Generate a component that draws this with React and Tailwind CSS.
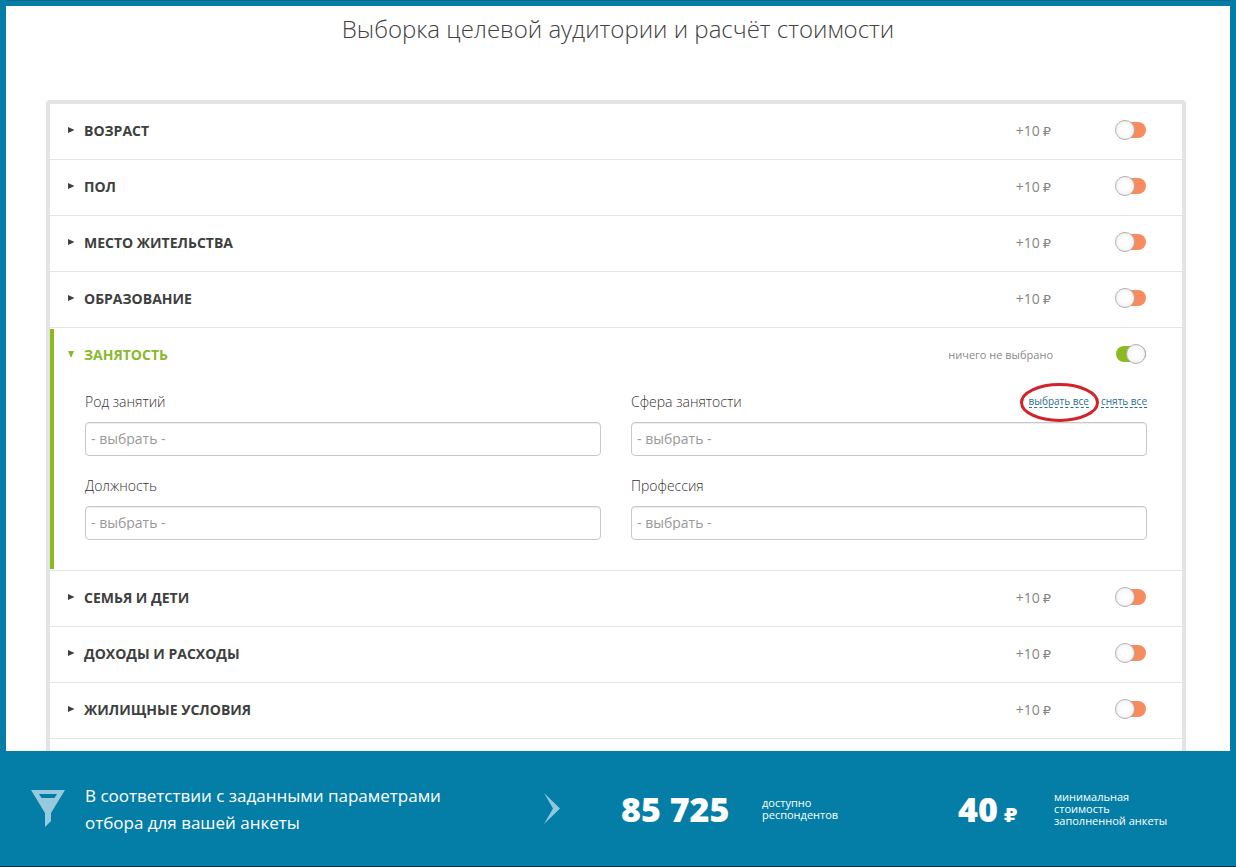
import { useState } from "react";

const before = ["ВОЗРАСТ", "ПОЛ", "МЕСТО ЖИТЕЛЬСТВА", "ОБРАЗОВАНИЕ"];
const after = ["СЕМЬЯ И ДЕТИ", "ДОХОДЫ И РАСХОДЫ", "ЖИЛИЩНЫЕ УСЛОВИЯ"];

function Toggle({ label, initial = false }) {
  const [on, setOn] = useState(initial);
  return (
    <label className="mb-1 flex h-5 w-8 shrink-0 cursor-pointer items-center justify-end">
      <input
        type="checkbox"
        role="switch"
        aria-label={label}
        checked={on}
        onChange={() => setOn(!on)}
        className="peer sr-only"
      />
      <span className="flex h-4 w-[30px] items-center justify-start rounded-full bg-[#f68b5e] peer-checked:justify-end peer-checked:bg-[#8ab920]">
        <span
          className={
            "size-5 shrink-0 rounded-full border border-[#b0b0b6] bg-radial from-white from-30% to-[#e9e9ec] " +
            (on ? "" : "-ml-px")
          }
        />
      </span>
    </label>
  );
}

function Arrow({ open }) {
  return (
    <svg aria-hidden="true" viewBox="0 0 6 6" className="mb-0.5 size-[6px] shrink-0 fill-current">
      {open ? <path d="M0 0h6L3.500 6h-1z" /> : <path d="M0 0L6 2.700v.6L0 6z" />}
    </svg>
  );
}

function Row({ title }) {
  return (
    <li className="flex h-14 items-center border-b border-[#e4e4e4] pr-9 pl-[18px] text-[#3d403f]">
      <button
        type="button"
        className="mb-0.5 flex flex-1 items-center gap-[10px] text-left text-[14px] leading-5 font-bold"
      >
        <Arrow />
        {title}
      </button>
      <span className="mr-[63px] mb-0.5 flex items-baseline gap-[3px] text-[14px] leading-5 text-[#858585]">
        +10 <span className="font-['DejaVu_Sans',sans-serif] text-[13px] leading-none">₽</span>
      </span>
      <Toggle label={title} />
    </li>
  );
}

function Field({ id, label, children }) {
  return (
    <div className="min-w-0">
      <div className="flex h-5 items-center justify-between">
        <label htmlFor={id} className="text-[14px] leading-5 font-light text-[#333]">
          {label}
        </label>
        {children}
      </div>
      <div className="mt-[10px] flex h-[34px] items-center rounded border border-[#c8c8c8] bg-white px-[5px] pb-0.5 shadow-[inset_0_1px_1px_rgba(0,0,0,0.075)]">
        <input
          id={id}
          type="text"
          placeholder="- выбрать -"
          className="h-[15px] w-full text-[14px] leading-[15px] outline-none placeholder:text-[#999]"
        />
      </div>
    </div>
  );
}

function Link({ children }) {
  return (
    <a href="#" className="border-b border-dashed border-[#2a6f96] text-[10px] leading-[11px] text-[#2a6f96]">
      {children}
    </a>
  );
}

export default function App() {
  return (
    <div className="flex h-screen flex-col bg-[#047ea6] font-['Open_Sans','Noto_Sans',sans-serif]">
      <main className="mx-[6px] flex min-h-0 flex-1 flex-col overflow-hidden border-t border-[#0d6789] bg-white">
        <div className="h-[5px] shrink-0 bg-[#047ea6]" />
        <h1 className="pt-[7px] text-center text-[24px] leading-8 font-light text-[#3f4142]">
          Выборка целевой аудитории и расчёт стоимости
        </h1>
        <ul className="mt-[55px] mr-11 ml-10 flex-1 rounded-t border-4 border-b-0 border-[#e4e4e4]">
          {before.map((t) => (
            <Row key={t} title={t} />
          ))}
          <li className="border-b border-[#e4e4e4] py-px">
            <div className="border-l-4 border-[#8ab920] pr-[35px] pb-[29px] pl-[14px]">
              <div className="flex h-[53px] items-center pr-px">
                <button
                  type="button"
                  aria-expanded="true"
                  className="mb-0.5 flex flex-1 items-center gap-[10px] text-left text-[14px] leading-5 font-bold text-[#8ab92d]"
                >
                  <Arrow open />
                  ЗАНЯТОСТЬ
                </button>
                <span className="mr-[61px] mb-0.5 text-[11px] leading-5 text-[#8a8a8a]">ничего не выбрано</span>
                <Toggle label="ЗАНЯТОСТЬ" initial />
              </div>
              <div className="mt-[10px] grid grid-cols-2 gap-x-[30px] gap-y-5 pl-[17px]">
                <Field id="activity" label="Род занятий" />
                <Field id="sphere" label="Сфера занятости">
                  <span className="flex items-center gap-3">
                    <span className="relative flex">
                      <Link>выбрать все</Link>
                      <svg
                        aria-hidden="true"
                        viewBox="0 0 80 40"
                        className="pointer-events-none absolute top-1/2 left-1/2 h-10 w-20 -translate-x-1/2 -translate-y-1/2"
                      >
                        <ellipse cx="40.500" cy="20.500" rx="38" ry="18" fill="none" stroke="#d2232a" strokeWidth="3" />
                      </svg>
                    </span>
                    <Link>снять все</Link>
                  </span>
                </Field>
                <Field id="position" label="Должность" />
                <Field id="profession" label="Профессия" />
              </div>
            </div>
          </li>
          {after.map((t) => (
            <Row key={t} title={t} />
          ))}
        </ul>
      </main>
      <footer className="flex h-[116px] shrink-0 items-center border-b border-[#12303c] text-white">
        <div className="flex w-1/2 items-center pl-[31px]">
          <svg aria-hidden="true" viewBox="0 0 34 37" className="h-[37px] w-[34px] shrink-0 fill-[#97cade]">
            <path fillRule="evenodd" d="M0 0H34L20 23V31L14 37V23ZM8 4L10.500 8H23.500L26 4Z" />
          </svg>
          <p className="ml-5 w-[400px] text-[17px] leading-[27px]">
            В соответствии с заданными параметрами
            <br />
            отбора для вашей анкеты
          </p>
          <svg aria-hidden="true" viewBox="0 0 16 31" className="ml-auto mr-[58px] h-[31px] w-4 shrink-0 fill-[#8fc8dc]">
            <path d="M0 0L16 15.500L0 31L9 15.500Z" />
          </svg>
        </div>
        <div className="flex flex-1 items-center">
          <p className="ml-[3px] w-[141px] text-[34px] leading-10 font-extrabold whitespace-nowrap">85 725</p>
          <p className="text-[11px] leading-3">
            доступно
            <br />
            респондентов
          </p>
        </div>
        <div className="flex w-[278px] items-center">
          <p className="flex w-24 items-baseline gap-[6px] text-[34px] leading-10 font-extrabold whitespace-nowrap">
            40<span className="font-['DejaVu_Sans',sans-serif] text-[20px] leading-none font-bold">₽</span>
          </p>
          <p className="text-[11px] leading-3">
            минимальная
            <br />
            стоимость
            <br />
            заполненной анкеты
          </p>
        </div>
      </footer>
    </div>
  );
}
